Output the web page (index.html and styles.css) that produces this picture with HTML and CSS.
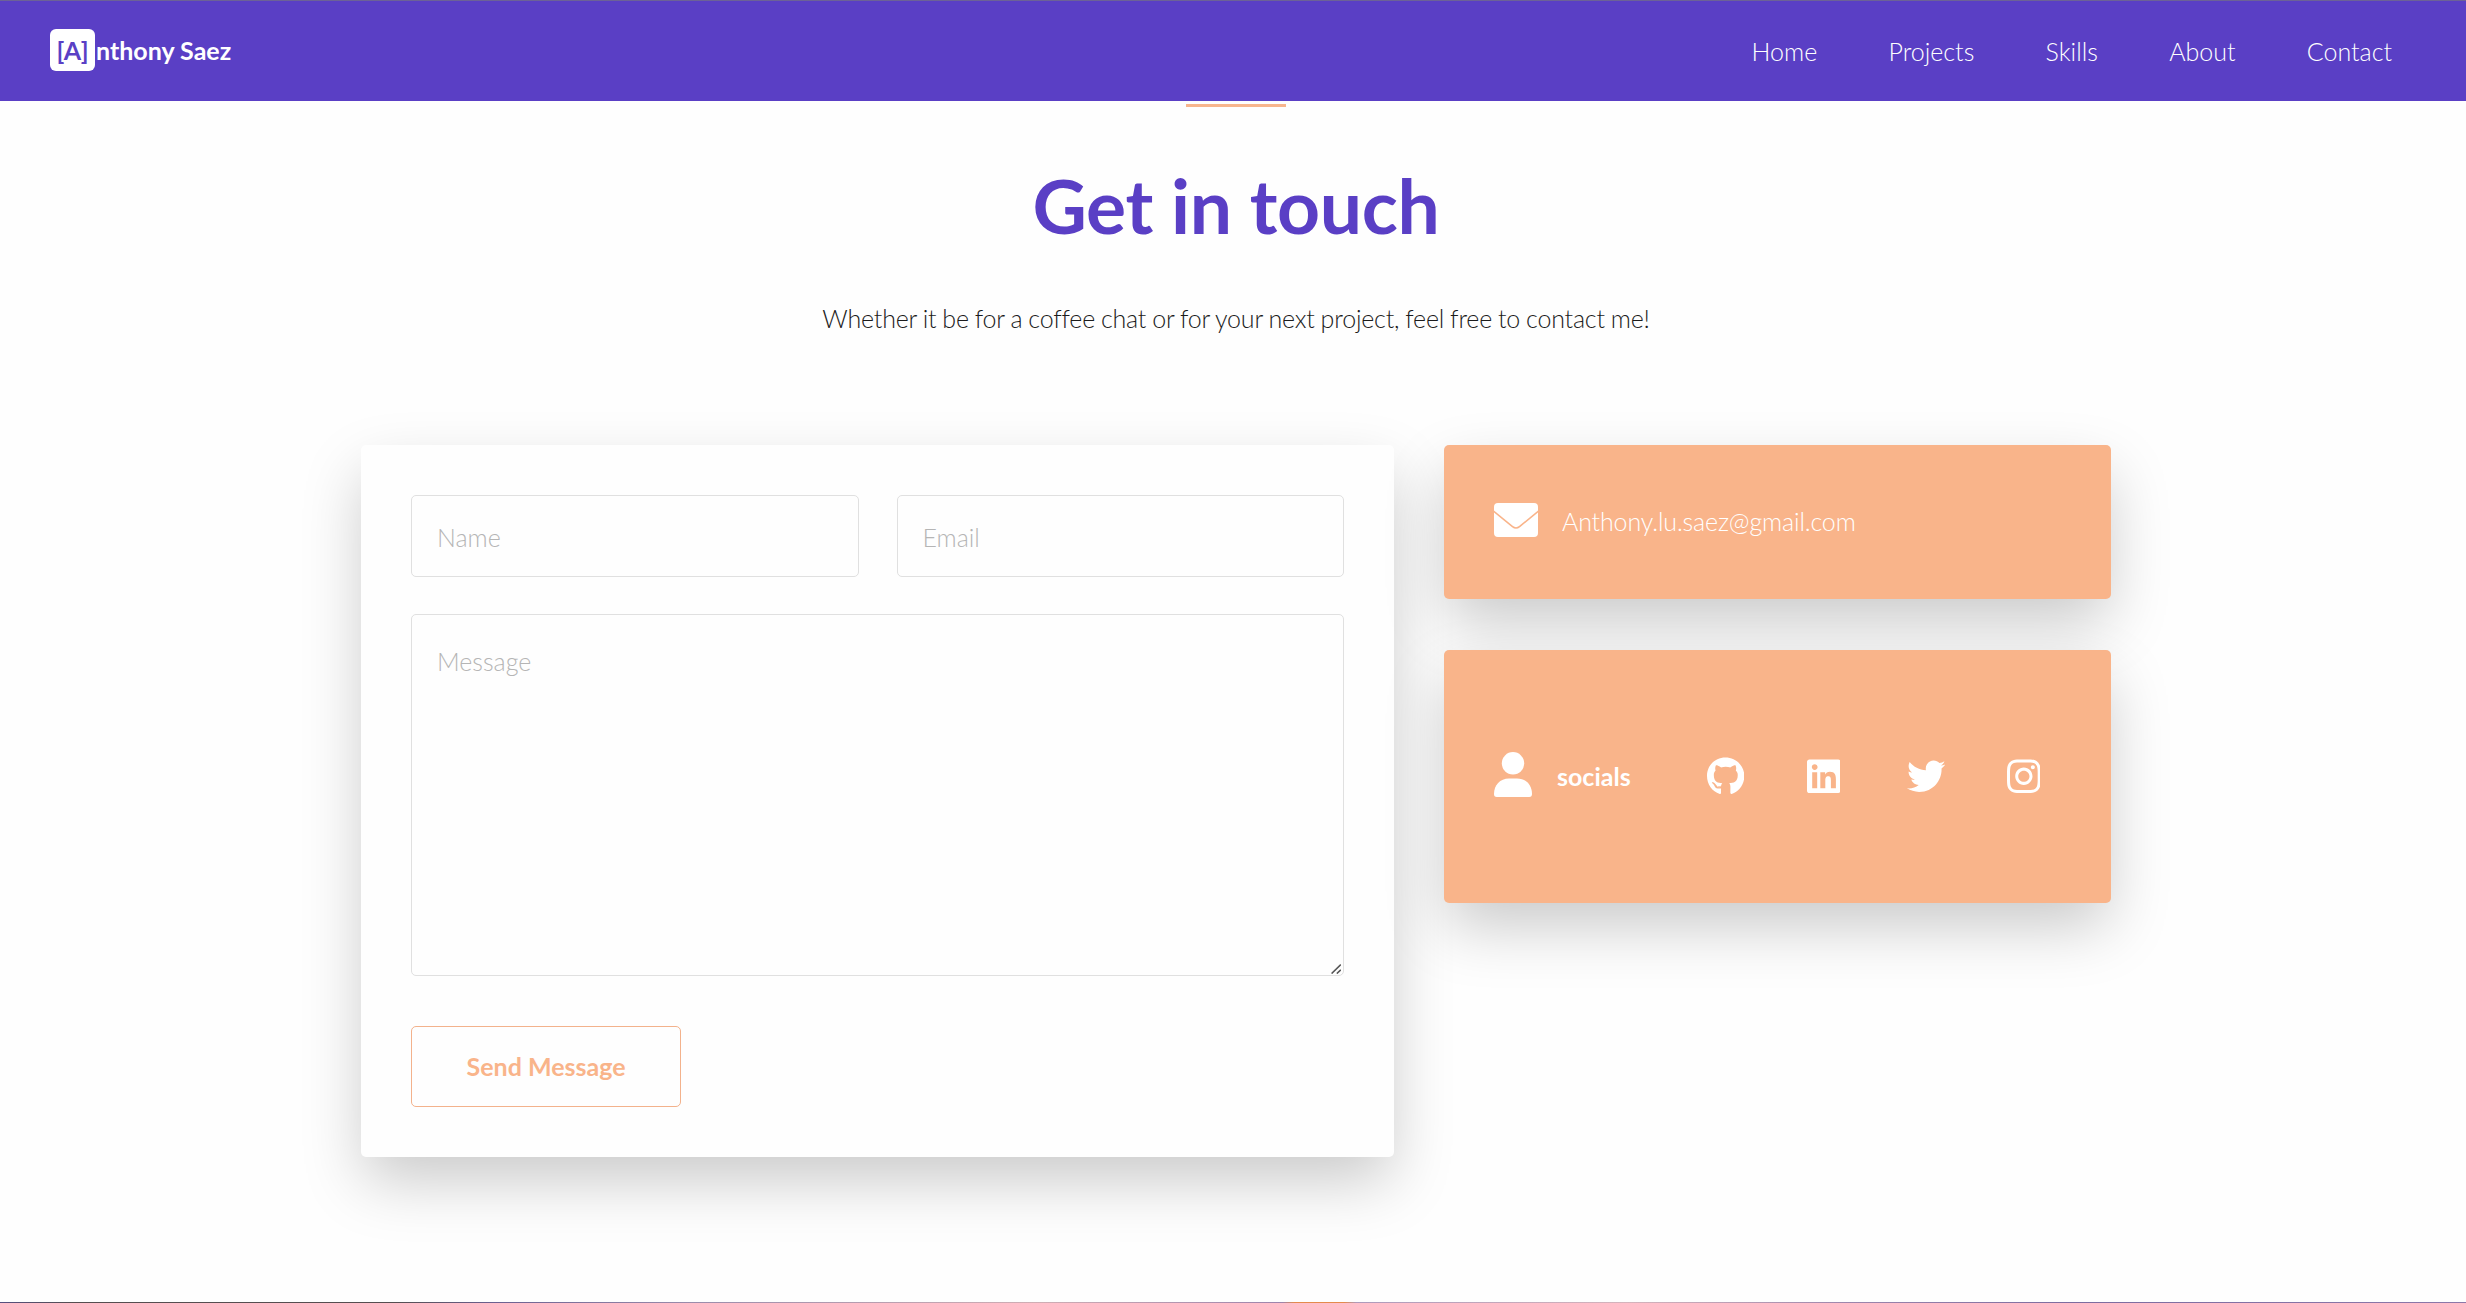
FILE: index.html
```html
<!DOCTYPE html>
<html lang="en">
<head>
<meta charset="utf-8">
<title>Anthony Saez</title>
<link rel="stylesheet" href="styles.css">
</head>
<body>
<header class="navbar">
  <a class="logo"><span class="logo-mark">[A]</span><span class="logo-text">nthony Saez</span></a>
  <nav class="menu">
    <a>Home</a><a>Projects</a><a>Skills</a><a>About</a><a>Contact</a>
  </nav>
</header>
<main class="contact">
  <div class="rule"></div>
  <h1 class="title">Get in touch</h1>
  <p class="lead">Whether it be for a coffee chat or for your next project, feel free to contact me!</p>
  <div class="columns">
    <form class="form">
      <div class="fields">
        <input class="field" type="text" placeholder="Name">
        <input class="field" type="text" placeholder="Email">
      </div>
      <div class="message-wrap">
        <textarea class="field message" placeholder="Message"></textarea>
        <svg class="grip" viewBox="0 0 10 10"><path d="M.6 9.600L9.800.6M5.800 9.600l4-3.800"/></svg>
      </div>
      <button class="send" type="button">Send Message</button>
    </form>
    <aside class="cards">
      <div class="card mail">
        <svg class="icon-mail" viewBox="0 0 44 34"><path d="M4 0h36a4 4 0 0 1 4 4v3.500L25 23q-3 2.300-6 0L0 7.500V4a4 4 0 0 1 4-4z"/><path d="M0 9.600l18 14.600q4 3 8 0L44 9.600V30a4 4 0 0 1-4 4H4a4 4 0 0 1-4-4z"/></svg>
        <span class="address">Anthony.lu.saez@gmail.com</span>
      </div>
      <div class="card socials">
        <svg class="icon-user" viewBox="0 0 38 45"><circle cx="19" cy="11.300" r="11.200"/><path d="M15 26.500h8c9 0 15 6.500 15 15.500 0 2-.8 3-2.800 3H2.800C.8 45 0 44 0 42c0-9 6-15.500 15-15.500z"/></svg>
        <b class="label">socials</b>
        <div class="links">
          <svg class="brand" viewBox="0 0 496 512"><path d="M165.900 397.400c0 2-2.300 3.600-5.200 3.600-3.300.3-5.600-1.300-5.600-3.600 0-2 2.300-3.600 5.200-3.600 3-.3 5.600 1.300 5.600 3.600zm-31.100-4.500c-.7 2 1.300 4.300 4.300 4.900 2.600 1 5.600 0 6.200-2s-1.300-4.300-4.300-5.200c-2.600-.7-5.500.3-6.200 2.300zm44.200-1.700c-2.900.7-4.900 2.600-4.600 4.900.3 2 2.900 3.300 5.900 2.600 2.900-.7 4.900-2.600 4.600-4.600-.3-1.900-3-3.200-5.900-2.900zM244.800 8C106.100 8 0 113.300 0 252c0 110.900 69.800 205.800 169.500 239.200 12.800 2.300 17.300-5.600 17.300-12.100 0-6.200-.3-40.400-.3-61.400 0 0-70 15-84.700-29.800 0 0-11.400-29.100-27.800-36.600 0 0-22.900-15.700 1.600-15.400 0 0 24.900 2 38.600 25.800 21.900 38.600 58.600 27.500 72.900 20.900 2.300-16 8.800-27.100 16-33.700-55.900-6.200-112.300-14.300-112.300-110.500 0-27.500 7.600-41.300 23.600-58.900-2.600-6.500-11.100-33.300 2.600-67.900 20.900-6.500 69 27 69 27 20-5.600 41.500-8.500 62.800-8.500s42.800 2.900 62.800 8.500c0 0 48.100-33.600 69-27 13.700 34.700 5.200 61.400 2.600 67.900 16 17.700 25.800 31.500 25.800 58.900 0 96.500-58.900 104.200-114.800 110.500 9.200 7.900 17 22.900 17 46.400 0 33.700-.3 75.400-.3 83.600 0 6.500 4.600 14.400 17.300 12.100C428.200 457.800 496 362.900 496 252 496 113.300 383.500 8 244.800 8z"/></svg>
          <svg class="brand" viewBox="0 0 448 512"><path d="M416 32H31.900C14.300 32 0 46.500 0 64.300v383.400C0 465.500 14.300 480 31.900 480H416c17.600 0 32-14.500 32-32.300V64.300c0-17.800-14.400-32.300-32-32.300zM135.400 416H69V202.200h66.500V416zm-33.200-243c-21.300 0-38.500-17.300-38.500-38.500S80.900 96 102.200 96c21.200 0 38.500 17.300 38.500 38.500 0 21.300-17.200 38.500-38.500 38.500zm282.100 243h-66.400V312c0-24.800-.5-56.700-34.500-56.700-34.600 0-39.900 27-39.900 54.900V416h-66.400V202.200h63.700v29.200h.9c8.900-16.800 30.600-34.500 62.900-34.500 67.200 0 79.700 44.300 79.700 101.900V416z"/></svg>
          <svg class="brand" viewBox="0 0 512 512"><path d="M459.370 151.716c.325 4.548.325 9.097.325 13.645 0 138.720-105.583 298.558-298.558 298.558-59.452 0-114.680-17.219-161.137-47.106 8.447.974 16.568 1.299 25.340 1.299 49.055 0 94.213-16.568 130.274-44.832-46.132-.975-84.792-31.188-98.112-72.772 6.498.974 12.995 1.624 19.818 1.624 9.421 0 18.843-1.300 27.614-3.573-48.081-9.747-84.143-51.980-84.143-102.985v-1.299c13.969 7.797 30.214 12.670 47.431 13.319-28.264-18.843-46.781-51.005-46.781-87.391 0-19.492 5.197-37.360 14.294-52.954 51.655 63.675 129.300 105.258 216.365 109.807-1.624-7.797-2.599-15.918-2.599-24.040 0-57.828 46.782-104.934 104.934-104.934 30.213 0 57.502 12.670 76.670 33.137 23.715-4.548 46.456-13.320 66.599-25.340-7.798 24.366-24.366 44.833-46.132 57.827 21.117-2.273 41.584-8.122 60.426-16.243-14.292 20.791-32.161 39.308-52.628 54.253z"/></svg>
          <svg class="brand" viewBox="0 0 448 512"><path d="M224.100 141c-63.600 0-114.900 51.300-114.900 114.900s51.300 114.900 114.900 114.900S339 319.500 339 255.900 287.700 141 224.100 141zm0 189.600c-41.100 0-74.700-33.500-74.700-74.700s33.500-74.700 74.700-74.700 74.700 33.500 74.700 74.700-33.600 74.700-74.700 74.700zm146.400-194.300c0 14.900-12 26.800-26.800 26.800-14.900 0-26.800-12-26.800-26.800s12-26.800 26.800-26.800 26.800 12 26.800 26.800zm76.100 27.200c-1.700-35.900-9.900-67.700-36.200-93.900-26.200-26.200-58-34.400-93.900-36.200-37-2.100-147.900-2.100-184.900 0-35.800 1.700-67.600 9.900-93.900 36.100s-34.400 58-36.200 93.900c-2.100 37-2.100 147.900 0 184.900 1.700 35.900 9.900 67.700 36.200 93.900s58 34.400 93.900 36.200c37 2.100 147.900 2.100 184.900 0 35.900-1.700 67.700-9.900 93.900-36.200 26.200-26.200 34.400-58 36.200-93.900 2.100-37 2.100-147.800 0-184.800zM398.800 388c-7.800 19.600-22.900 34.700-42.600 42.600-29.500 11.700-99.500 9-132.100 9s-102.700 2.600-132.100-9c-19.600-7.800-34.700-22.900-42.600-42.600-11.700-29.500-9-99.500-9-132.100s-2.600-102.700 9-132.100c7.800-19.600 22.900-34.700 42.600-42.600 29.500-11.700 99.500-9 132.100-9s102.700-2.600 132.100 9c19.600 7.800 34.700 22.900 42.600 42.600 11.700 29.500 9 99.500 9 132.100s2.700 102.700-9 132.100z"/></svg>
        </div>
      </div>
    </aside>
  </div>
</main>
<footer class="footer"></footer>
</body>
</html>
```
FILE: styles.css
```css
* { box-sizing: border-box; margin: 0; }
html { font-size: 25px; }
body {
  height: 1303px;
  overflow: hidden;
  display: flex;
  flex-direction: column;
  background: #fefefe;
  color: #1b1b1b;
  font: 300 25px/1.5 Lato, sans-serif;
}
.navbar {
  flex: none;
  height: 101px;
  border-top: 1px solid #6c6296;
  background: #5a3fc5;
  color: #fff;
  display: flex;
  justify-content: space-between;
  padding: 0 74px 0 50px;
}
.logo { display: flex; align-items: flex-start; font-weight: 700; line-height: 42px; padding-top: 28px; }
.logo-mark {
  width: 45px;
  height: 42px;
  border-radius: 6px;
  background: #fff;
  color: #5a3fc5;
  text-align: center;
}
.logo-text { padding-left: 1px; }
.menu { display: flex; gap: 71.300px; line-height: 37px; padding-top: 32px; }
.contact {
  flex: 1;
  padding: 3px 0 0 6px;
  display: flex;
  flex-direction: column;
  align-items: center;
}
.rule { width: 100px; height: 3px; background: #f7b58d; }
.title {
  margin-top: 53px;
  color: #5a3fc5;
  font-size: 75px;
  font-weight: 700;
  line-height: 90px;
  letter-spacing: -.3px;
}
.lead { margin-top: 49px; line-height: 38px; letter-spacing: -.2px; word-spacing: -.6px; }
.columns {
  width: 1750px;
  margin-top: 108px;
  display: grid;
  grid-template-columns: 1033px 667px;
  gap: 50px;
  align-items: start;
}
.form, .card { border-radius: 5px; box-shadow: 0 26px 62px -3px rgba(0, 0, 0, .21); }
.form { height: 712px; padding: 50px; background: #fefefe; display: flex; flex-direction: column; align-items: flex-start; }
.fields { width: 100%; display: grid; grid-template-columns: 1fr 1fr; gap: 38px; }
.field {
  width: 100%;
  height: 82px;
  padding: 2px 25px 0;
  border: 1px solid #e0e0e0;
  border-radius: 5px;
  background: transparent;
  font: 300 25px/37px Lato, sans-serif;
  outline: none;
}
.field::placeholder { color: #b5b5b5; opacity: 1; }
.message-wrap { position: relative; width: 100%; margin-top: 37px; }
.message { display: block; height: 362px; padding: 28px 25px; resize: none; }
.grip {
  position: absolute;
  right: 3px;
  bottom: 2px;
  width: 10px;
  height: 10px;
  fill: none;
  stroke: #555;
  stroke-width: 1.500;
}
.send {
  width: 270px;
  height: 81px;
  margin-top: 50px;
  border: 1px solid #f3b28c;
  border-radius: 5px;
  background: transparent;
  color: #f9b48a;
  font: 700 25px/37px Lato, sans-serif;
}
.cards { display: grid; gap: 51px; }
.card { display: flex; align-items: center; padding: 0 50px; background: #f9b48a; color: #fff; }
.card svg { fill: #fff; flex: none; }
.mail { height: 154px; }
.address { letter-spacing: -.15px; }
.icon-mail { width: 44px; height: 34px; margin: -4px 24px 0 0; }
.socials { height: 253px; }
.icon-user { width: 38px; height: 45px; margin: -5px 25px 0 0; }
.label { width: 149.500px; font-weight: 700; }
.links { display: grid; grid-template-columns: repeat(4, 100px); margin: -1px -100px 0 0; }
.brand { height: 38.500px; }
.footer {
  flex: none;
  height: 1px;
  background: linear-gradient(90deg, #575080 0, #554e50 3%, #554e50 16%, #6b6090 20%, #9a8cab 28%, #d0aeb4 42%, #9c84ac 52%, #e58a4c 52.500%, #e58a4c 54.500%, #ad9abb 55%, #d5b4bc 66%, #9c86ac 75%, #7c6c9f 84%, #8c78a9 100%);
}
```
